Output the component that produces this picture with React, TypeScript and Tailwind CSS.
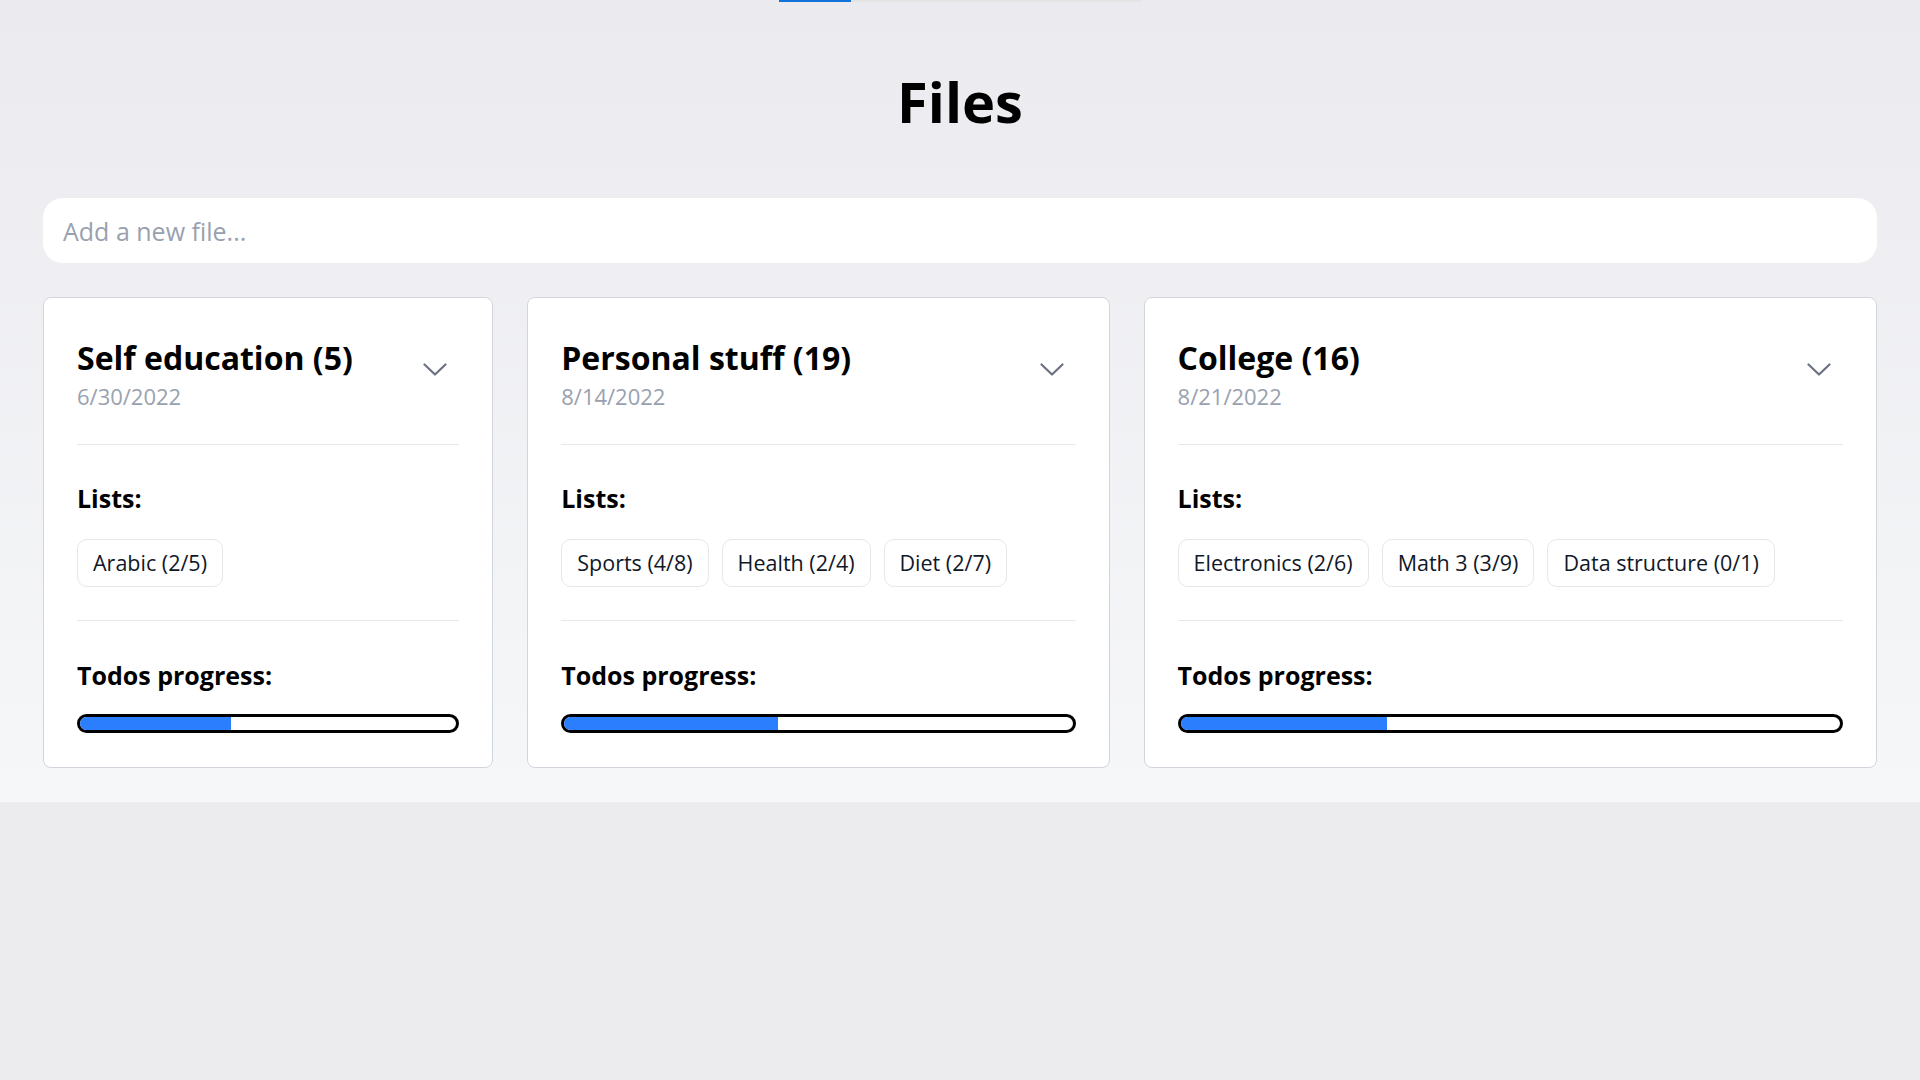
import { useState } from 'react'

type TodoList = { name: string; done: number; total: number }
type FileItem = { id: number; name: string; date: string; lists: TodoList[] }

const FILES: FileItem[] = [
  {
    id: 1,
    name: 'Self education',
    date: '6/30/2022',
    lists: [{ name: 'Arabic', done: 2, total: 5 }],
  },
  {
    id: 2,
    name: 'Personal stuff',
    date: '8/14/2022',
    lists: [
      { name: 'Sports', done: 4, total: 8 },
      { name: 'Health', done: 2, total: 4 },
      { name: 'Diet', done: 2, total: 7 },
    ],
  },
  {
    id: 3,
    name: 'College',
    date: '8/21/2022',
    lists: [
      { name: 'Electronics', done: 2, total: 6 },
      { name: 'Math 3', done: 3, total: 9 },
      { name: 'Data structure', done: 0, total: 1 },
    ],
  },
]

function ChevronDown() {
  return (
    <svg width="24" height="13" viewBox="0 0 24 13" fill="none" className="text-gray-500">
      <polyline
        points="1.5,1.5 12,11.5 22.5,1.5"
        stroke="currentColor"
        strokeWidth="2.2"
        strokeLinecap="round"
        strokeLinejoin="round"
      />
    </svg>
  )
}

function FileCard({ file }: { file: FileItem }) {
  const [open, setOpen] = useState(false)
  const total = file.lists.reduce((n, l) => n + l.total, 0)
  const done = file.lists.reduce((n, l) => n + l.done, 0)
  const pct = total ? (done / total) * 100 : 0

  return (
    <div className="rounded-lg border border-gray-300 bg-white px-[33px] pt-10 pb-[34px]">
      <div className="flex items-start justify-between border-b border-gray-200 pb-[33px]">
        <div className="min-w-0">
          <h2 className="text-[32px] leading-[40px] font-bold text-black">
            {file.name} ({total})
          </h2>
          <p className="mt-[3px] text-[22px] leading-[30px] text-gray-400">{file.date}</p>
        </div>
        <button
          type="button"
          onClick={() => setOpen(!open)}
          aria-label="Expand"
          className="mt-[25px] mr-3 shrink-0"
        >
          <ChevronDown />
        </button>
      </div>

      <div className="border-b border-gray-200 pt-[37px] pb-[33px]">
        <h3 className="text-[25px] leading-[32px] font-bold text-black">Lists:</h3>
        <div className="mt-[25px] flex flex-wrap gap-[13px]">
          {file.lists.map((l) => (
            <span
              key={l.name}
              className="rounded-[10px] border border-gray-200 px-[15px] py-2 text-[21.5px] leading-[30px] text-gray-900"
            >
              {l.name} ({l.done}/{l.total})
            </span>
          ))}
        </div>
      </div>

      <div className="pt-[38px]">
        <h3 className="text-[25px] leading-[32px] font-bold text-black">Todos progress:</h3>
        <div className="mt-[23px] h-[19px] overflow-hidden rounded-full border-[3px] border-black bg-white">
          <div className="h-full bg-blue-500" style={{ width: `${pct}%` }} />
        </div>
      </div>
    </div>
  )
}

export default function App() {
  return (
    <div
      className="min-h-screen bg-[#ececef] text-black"
      style={{ fontFamily: '"Segoe UI", "Open Sans", "Noto Sans", sans-serif' }}
    >
      <div className="bg-gradient-to-b from-[#ebebef] to-[#f6f7f9] px-[43px] pb-[34px]">
        <div className="mx-auto flex h-[2px] w-[362px] bg-[#e3e3e3]">
          <div className="h-full w-[72px] bg-[#1473d8]" />
        </div>

        <h1 className="mt-[63px] text-center text-[56px] leading-[72px] font-bold">Files</h1>

        <input
          type="text"
          placeholder="Add a new file..."
          className="mt-[61px] block h-[65px] w-full rounded-[20px] bg-white px-5 text-[25px] text-gray-900 outline-none placeholder:text-gray-400"
        />

        <div className="mt-[34px] grid grid-cols-[450fr_582fr_733fr] gap-[34px]">
          {FILES.map((f) => (
            <FileCard key={f.id} file={f} />
          ))}
        </div>
      </div>
    </div>
  )
}
